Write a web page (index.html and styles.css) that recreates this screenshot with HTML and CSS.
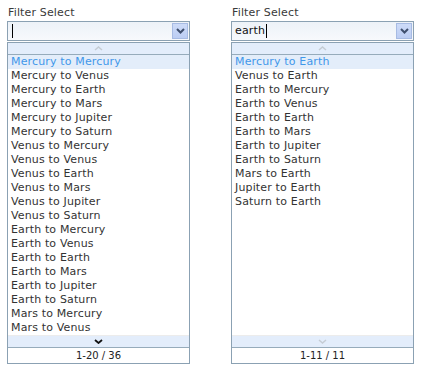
FILE: index.html
```html
<!DOCTYPE html>
<html>
<head>
<meta charset="utf-8">
<link rel="stylesheet" href="styles.css">
</head>
<body>
<div class="page">
  <div class="widget">
    <div class="label">Filter Select</div>
    <div class="input">
      <span class="value"></span><span class="caret"></span>
      <span class="btn"><svg width="9" height="6" viewBox="0 0 9 6"><path d="M1 1 L4.5 4.5 L8 1" fill="none" stroke="#3f4f6e" stroke-width="2"/></svg></span>
    </div>
    <div class="list">
      <div class="band band-top"><svg width="9" height="5" viewBox="0 0 9 5"><path d="M1 4 L4.5 1 L8 4" fill="none" stroke="#c5ccd4" stroke-width="1.5"/></svg></div>
      <div class="items">
        <div class="item active">Mercury to Mercury</div>
        <div class="item">Mercury to Venus</div>
        <div class="item">Mercury to Earth</div>
        <div class="item">Mercury to Mars</div>
        <div class="item">Mercury to Jupiter</div>
        <div class="item">Mercury to Saturn</div>
        <div class="item">Venus to Mercury</div>
        <div class="item">Venus to Venus</div>
        <div class="item">Venus to Earth</div>
        <div class="item">Venus to Mars</div>
        <div class="item">Venus to Jupiter</div>
        <div class="item">Venus to Saturn</div>
        <div class="item">Earth to Mercury</div>
        <div class="item">Earth to Venus</div>
        <div class="item">Earth to Earth</div>
        <div class="item">Earth to Mars</div>
        <div class="item">Earth to Jupiter</div>
        <div class="item">Earth to Saturn</div>
        <div class="item">Mars to Mercury</div>
        <div class="item">Mars to Venus</div>
      </div>
      <div class="band band-bottom"><svg width="9" height="5" viewBox="0 0 9 5"><path d="M1 1 L4.5 4 L8 1" fill="none" stroke="#111" stroke-width="1.8"/></svg></div>
      <div class="footer">1-20 / 36</div>
    </div>
  </div>
  <div class="widget">
    <div class="label">Filter Select</div>
    <div class="input">
      <span class="value">earth</span><span class="caret"></span>
      <span class="btn"><svg width="9" height="6" viewBox="0 0 9 6"><path d="M1 1 L4.5 4.5 L8 1" fill="none" stroke="#3f4f6e" stroke-width="2"/></svg></span>
    </div>
    <div class="list">
      <div class="band band-top"><svg width="9" height="5" viewBox="0 0 9 5"><path d="M1 4 L4.5 1 L8 4" fill="none" stroke="#c5ccd4" stroke-width="1.5"/></svg></div>
      <div class="items">
        <div class="item active">Mercury to Earth</div>
        <div class="item">Venus to Earth</div>
        <div class="item">Earth to Mercury</div>
        <div class="item">Earth to Venus</div>
        <div class="item">Earth to Earth</div>
        <div class="item">Earth to Mars</div>
        <div class="item">Earth to Jupiter</div>
        <div class="item">Earth to Saturn</div>
        <div class="item">Mars to Earth</div>
        <div class="item">Jupiter to Earth</div>
        <div class="item">Saturn to Earth</div>
      </div>
      <div class="band band-bottom"><svg width="9" height="5" viewBox="0 0 9 5"><path d="M1 1 L4.5 4 L8 1" fill="none" stroke="#c5ccd4" stroke-width="1.5"/></svg></div>
      <div class="footer">1-11 / 11</div>
    </div>
  </div>
</div>
</body>
</html>
```

FILE: styles.css
```css
html, body {
  margin: 0;
  padding: 0;
  background: #fff;
}
body {
  font-family: "DejaVu Sans", Verdana, sans-serif;
  font-size: 11px;
  letter-spacing: 0.15px;
  color: #333;
}
.page {
  display: flex;
  gap: 41px;
  padding: 5px 0 0 7px;
}
.widget {
  width: 183px;
  display: flex;
  flex-direction: column;
}
.label {
  height: 15px;
  line-height: 15px;
  padding-left: 1px;
  margin-bottom: 1px;
  color: #3a3a3a;
}
.input {
  box-sizing: border-box;
  height: 20px;
  border: 1px solid #8ba1b3;
  background: linear-gradient(#edf2f8, #f7f9fc);
  display: flex;
  align-items: center;
  padding-left: 3px;
  color: #111;
}
.value {
  line-height: 14px;
}
.caret {
  display: inline-block;
  width: 1px;
  height: 14px;
  background: #000;
  margin-left: 1px;
}
.btn {
  margin-left: auto;
  margin-right: 1px;
  box-sizing: border-box;
  width: 16px;
  height: 16px;
  border: 1px solid #a7bbe3;
  background: linear-gradient(#cddbf8, #bccdf3);
  display: flex;
  align-items: center;
  justify-content: center;
}
.list {
  box-sizing: border-box;
  height: 322px;
  margin-top: 1px;
  border: 1px solid #8ba1b3;
  display: flex;
  flex-direction: column;
}
.band {
  height: 11px;
  background: #e3edfb;
  border-bottom: 1px solid #96abbb;
  display: flex;
  align-items: center;
  justify-content: center;
}
.band-bottom {
  border-top: 1px solid #ececec;
}
.items {
  height: 280px;
}
.item {
  height: 14px;
  line-height: 14px;
  padding-left: 3px;
  white-space: nowrap;
}
.item.active {
  background: #e3edfa;
  color: #3f97ea;
}
.footer {
  flex: 1;
  display: flex;
  align-items: center;
  justify-content: center;
  font-size: 10px;
  letter-spacing: 0;
  color: #222;
}
```
